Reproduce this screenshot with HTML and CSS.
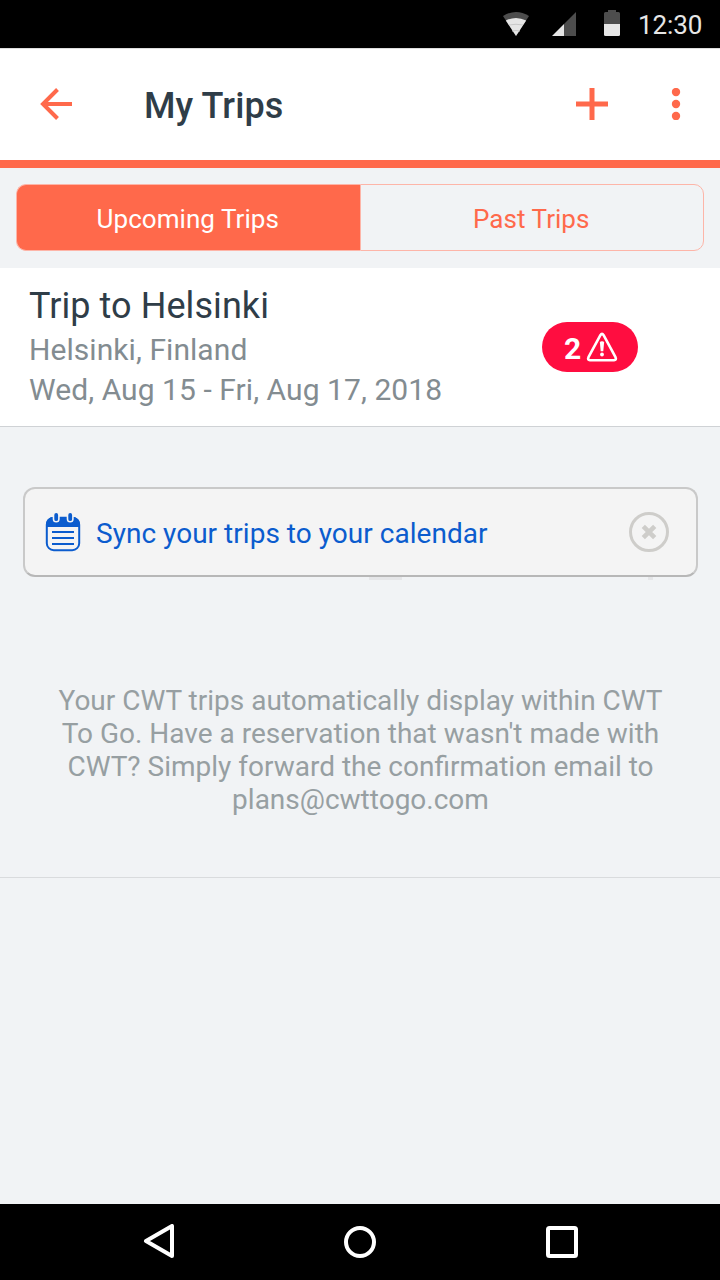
FILE: index.html
```html
<!DOCTYPE html>
<html lang="en">
<head>
<meta charset="utf-8">
<title>My Trips</title>
<link rel="stylesheet" href="styles.css">
</head>
<body>
<div class="screen">
  <div class="status-bar">
    <svg class="status-icons" width="122" height="48" viewBox="0 0 122 48">
      <path fill="#4d4d4d" d="M3 16Q16 8 29 16L16 36Z"/>
      <path fill="#e6e6e6" d="M5.800 20.500Q16 15.500 26.200 20.500L16 36Z"/>
      <path stroke="#c8c8c8" stroke-width="1" fill="none" d="M9 25Q16 23.500 23 25M12 31Q16 30 20 31"/>
      <path fill="#4d4d4d" d="M76 12V36H64V24Z"/>
      <path fill="#e6e6e6" d="M64 24V36H52Z"/>
      <path fill="#4d4d4d" d="M108 10h8v2h2.500q1.500 0 1.500 1.500V24h-16V13.500q0-1.500 1.500-1.500h2.500Z"/>
      <path fill="#e6e6e6" d="M104 24h16v10.500q0 1.500-1.500 1.500h-13q-1.500 0-1.500-1.500Z"/>
    </svg>
    <span class="clock">12:30</span>
  </div>
  <header class="app-bar">
    <svg class="back" width="32" height="32" viewBox="0 0 32 32"><path d="M32 16H3M17.500 1.500L3 16L17.500 30.500"/></svg>
    <h1 class="title">My Trips</h1>
    <svg class="add" width="32" height="32" viewBox="0 0 32 32"><path d="M16 0V32M0 16H32"/></svg>
    <svg class="more" width="10" height="32" viewBox="0 0 10 32"><circle cx="5" cy="4" r="4.200"/><circle cx="5" cy="16" r="4.200"/><circle cx="5" cy="28" r="4.200"/></svg>
  </header>
  <nav class="tabs">
    <div class="tab tab-active"><span class="tab-upcoming">Upcoming Trips</span></div>
    <div class="tab tab-idle"><span class="tab-past">Past Trips</span></div>
  </nav>
  <section class="trip">
    <div class="trip-text">
      <div class="trip-name"><span>Trip to Helsinki</span></div>
      <div class="trip-line"><span>Helsinki, Finland</span></div>
      <div class="trip-line"><span>Wed, Aug 15 - Fri, Aug 17, 2018</span></div>
    </div>
    <div class="alert">
      <span class="alert-count">2</span>
      <svg width="32" height="32" viewBox="0 0 32 32">
        <path fill="none" stroke="#fff" stroke-width="2.600" stroke-linejoin="round" d="M14.400 4.200Q16 1.600 17.600 4.200L29.500 26.200Q30.800 29 28 29.200H4Q1.200 29 2.500 26.200Z"/>
        <path fill="#fff" d="M13.900 11.500Q14 10.200 16 10.200T18.100 11.500L17.300 20.200H14.700Z"/>
        <circle cx="16" cy="23.500" r="1.900" fill="#fff"/>
      </svg>
    </div>
  </section>
  <section class="info">
    <div class="sync">
      <svg class="calendar" width="36" height="40" viewBox="0 0 36 40">
        <rect x="1.800" y="5.800" width="32.400" height="32.400" rx="7" fill="none" stroke="#0b5cce" stroke-width="2"/>
        <path fill="#0b5cce" d="M1 15V12Q1 6 8 5H28Q35 6 35 12V15Z"/>
        <path stroke="#f4f4f4" stroke-width="7" stroke-linecap="round" d="M11.200 1V7M25.200 1V7"/>
        <path stroke="#0b5cce" stroke-width="3.800" stroke-linecap="round" d="M11.200 3V7.200M25.200 3V7.200"/>
        <path stroke="#0b5cce" stroke-width="2" d="M7 20H29M7 26H29M7 32H29"/>
      </svg>
      <span class="sync-label">Sync your trips to your calendar</span>
      <svg class="close" width="40" height="40" viewBox="0 0 40 40">
        <circle cx="20" cy="20" r="18.500" fill="none" stroke="#cecdca" stroke-width="3"/>
        <path stroke="#cecdca" stroke-width="4.600" d="M14.300 14.300L25.700 25.700M25.700 14.300L14.300 25.700"/>
      </svg>
    </div>
    <p class="note">Your CWT trips automatically display within CWT<br>To Go. Have a reservation that wasn't made with<br>CWT? Simply forward the confirmation email to<br>plans@cwttogo.com</p>
  </section>
  <footer class="nav-bar">
    <svg width="32" height="36" viewBox="0 0 32 36"><path d="M4 17L30 2V32Z" stroke-linejoin="round"/></svg>
    <svg width="32" height="32" viewBox="0 0 32 32"><circle cx="16" cy="16" r="14"/></svg>
    <svg width="32" height="32" viewBox="0 0 32 32"><rect x="2" y="2" width="28" height="28" rx="1.500"/></svg>
  </footer>
</div>
</body>
</html>
```
FILE: styles.css
```css
* { box-sizing: border-box; }
body { margin: 0; font-family: Roboto, "Liberation Sans", sans-serif; }
svg { display: block; flex: none; }
span { white-space: nowrap; }
.screen { width: 720px; height: 1280px; display: flex; flex-direction: column; background: #f1f3f5; overflow: hidden; }
.status-bar { height: 48px; flex: none; background: #000; display: flex; align-items: center; padding-left: 500px; }
.clock { margin-left: 16px; font-size: 26px; line-height: 30px; letter-spacing: -0.1px; color: #e6e6e6; padding-top: 2px; }
.app-bar { height: 120px; flex: none; background: #fff; border-top: 1px solid #dedede; border-bottom: 8px solid #ff694b; display: flex; align-items: center; padding: 0 39px 1px 40px; }
.title { margin: 4px 0 0 72px; font-size: 36px; line-height: 42px; letter-spacing: 0.1px; font-weight: 500; color: #2f3d48; flex: 1; }
.back { fill: none; stroke: #ff694b; stroke-width: 4; }
.add { fill: none; stroke: #ff694b; stroke-width: 5; }
.more { margin-left: 63px; fill: #ff694b; }
.tabs { height: 100px; flex: none; display: flex; padding: 16px 16px 17px; }
.tab { flex: 1; display: flex; align-items: center; justify-content: center; font-size: 26px; line-height: 30px; letter-spacing: 0.05px; padding: 2px 1px 0 0; border: 1px solid #fdb5a8; }
.tab-active { background: #ff694b; color: #fff; border-radius: 10px 0 0 10px; border-right: 0; }
.tab-idle { color: #ff694b; border-radius: 0 10px 10px 0; }
.trip { height: 159px; flex: none; background: #fff; border-bottom: 1px solid #cfd2d5; display: flex; padding: 17px 82px 0 29px; justify-content: space-between; }
.trip-name { font-size: 36px; line-height: 42px; letter-spacing: 0.07px; color: #2f3d48; margin-bottom: 3px; }
.trip-line { font-size: 30px; line-height: 40px; letter-spacing: 0.06px; color: #838c91; }
.alert { width: 96px; height: 50px; margin-top: 37px; border-radius: 25px; background: #ff0d40; display: flex; align-items: center; padding-left: 22px; color: #fff; }
.alert-count { width: 22px; font-size: 30px; line-height: 36px; font-weight: 700; padding-top: 4px; }
.info { height: 451px; flex: none; border-bottom: 1px solid #d9dbdd; padding: 60px 22px 0 23px; }
.sync { position: relative; height: 90px; border: 2px solid #c9c9c9; border-bottom-color: #b7b7b7; border-radius: 12px; background: #f4f4f4; display: flex; align-items: center; padding: 0 27px 0 20px; }
.sync::before, .sync::after { content: ""; position: absolute; top: 88px; height: 3px; background: #e5e6e8; }
.sync::before { left: 344px; width: 33px; }
.sync::after { left: 623px; width: 5px; }
.calendar { margin-bottom: 1px; }
.sync-label { margin-left: 15px; font-size: 28px; line-height: 34px; letter-spacing: 0.03px; color: #0b5cce; padding-top: 3px; }
.close { margin-left: auto; }
.note { margin: 107px 0 0; text-align: center; font-size: 28px; line-height: 33px; color: #979fa2; white-space: nowrap; }
.nav-bar { height: 76px; flex: none; margin-top: auto; background: #000; display: flex; align-items: center; justify-content: space-between; padding: 0 142px; }
.nav-bar svg { fill: none; stroke: #fff; stroke-width: 4; }
```
